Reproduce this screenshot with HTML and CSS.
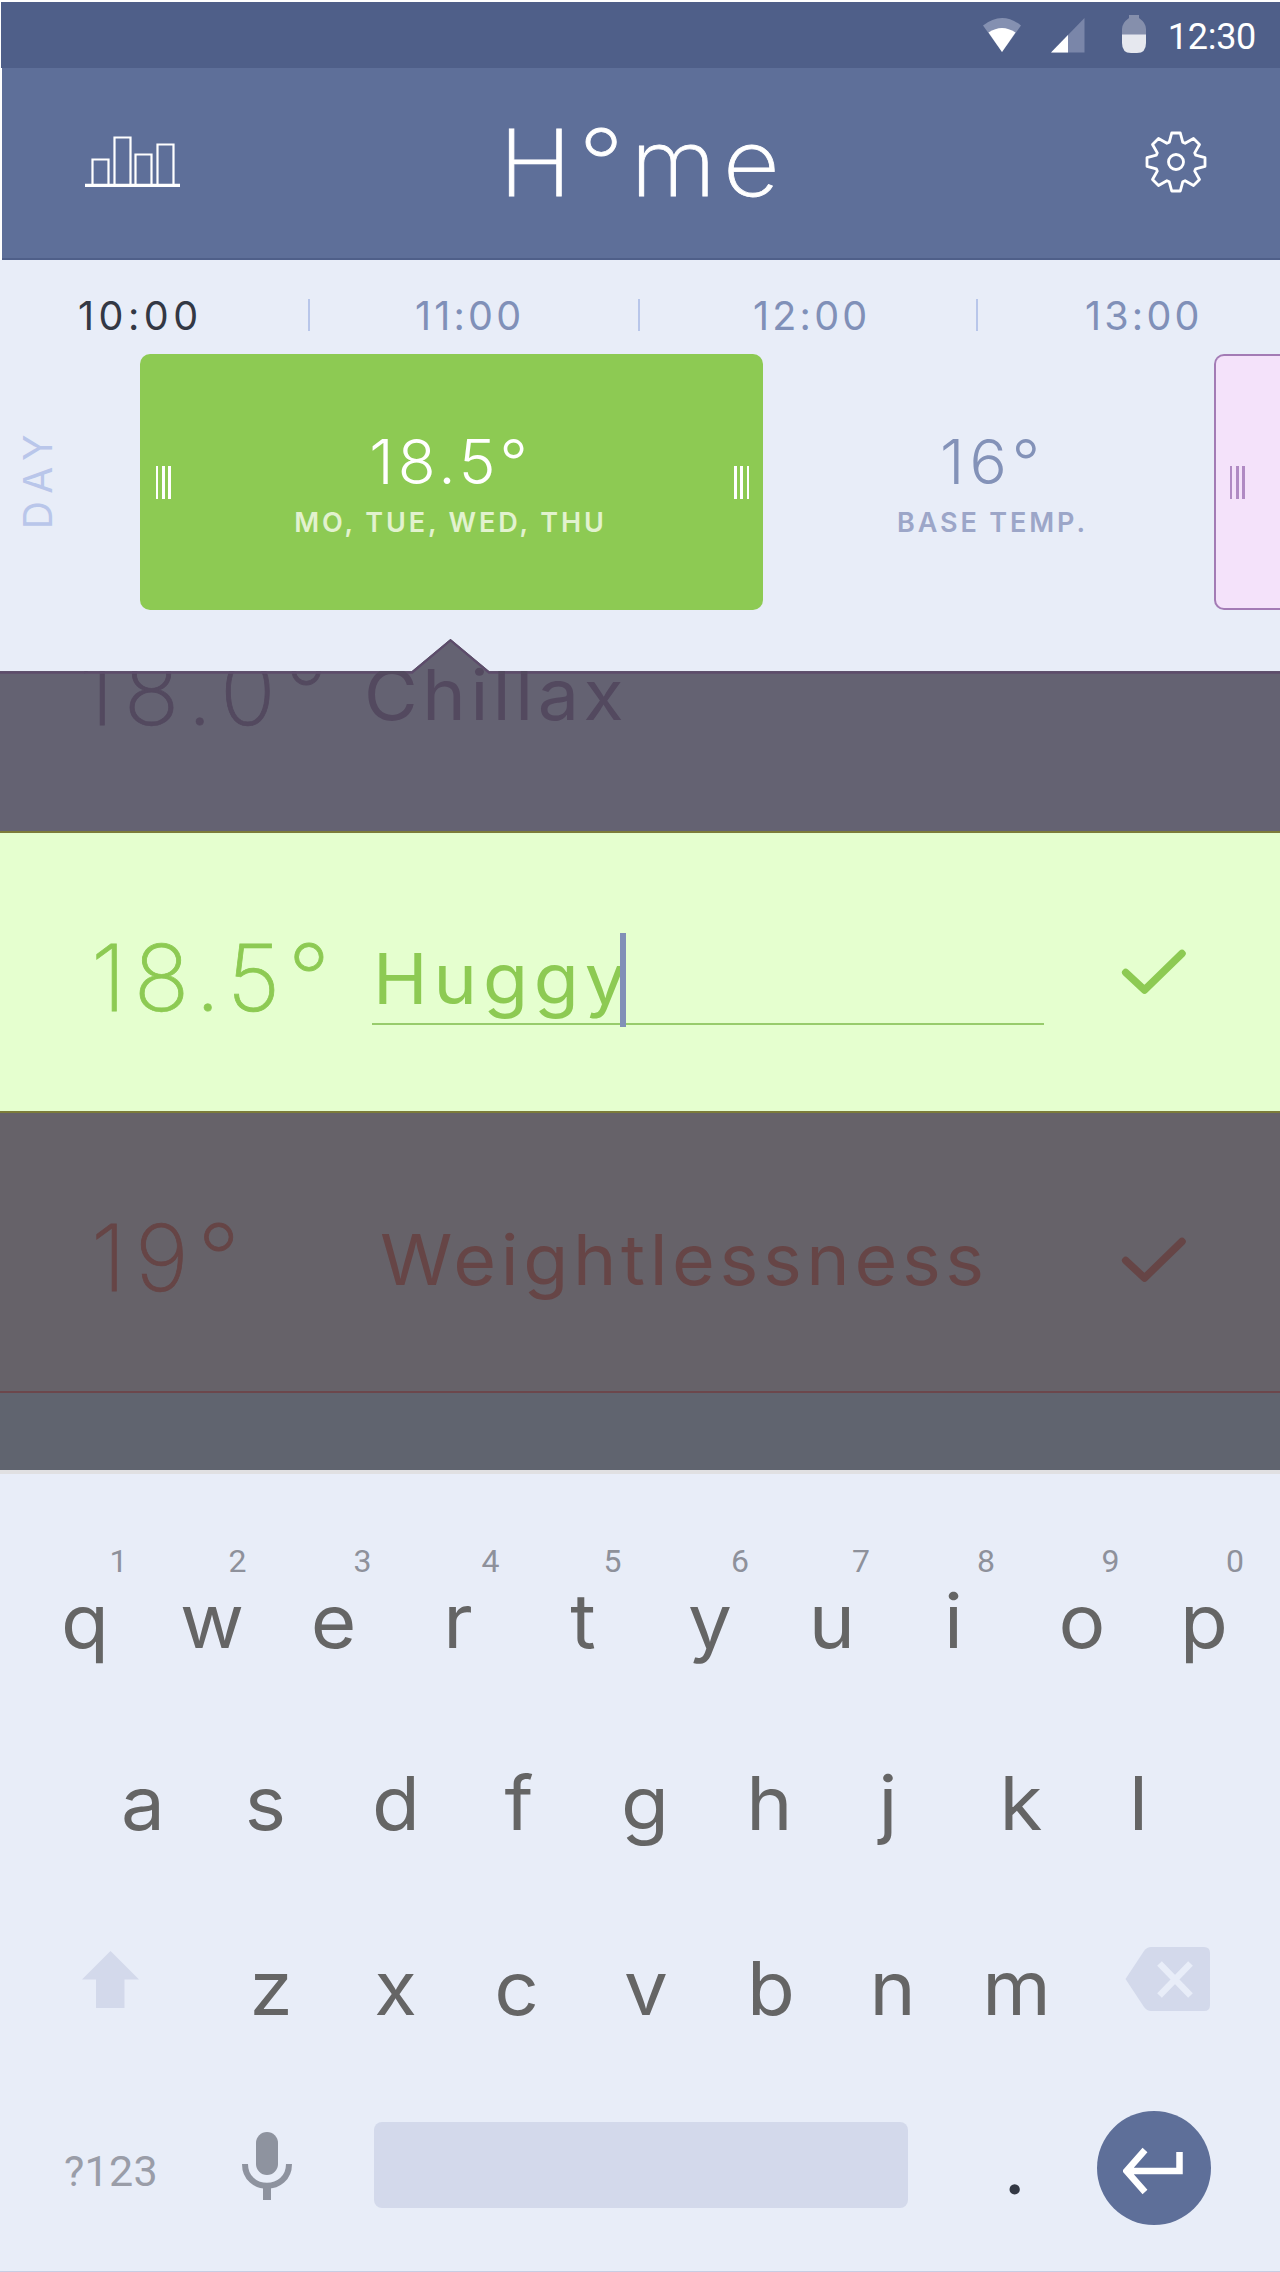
FILE: index.html
```html
<!DOCTYPE html>
<html lang="en">
<head>
<meta charset="utf-8">
<title>H°me</title>
<link rel="stylesheet" href="styles.css">
</head>
<body>
<header class="top">
  <div class="status">
    <svg class="wifi" width="40" height="36" viewBox="0 0 40 36"><path d="M1 8.500Q20 -6.500 39 8.500L20 35z" fill="#8490b1"/><path d="M6.500 15.500Q20 6.500 33.500 15.500L20 35z" fill="#fff"/></svg>
    <svg class="signal" width="34" height="35" viewBox="0 0 34 35"><path d="M33.500 0V34.500H0z" fill="#7a86a9"/><path d="M17 17V34.500H0z" fill="#fff"/></svg>
    <svg class="battery" width="24" height="38" viewBox="0 0 24 38"><path d="M7 0H17V3Q24 8 24 14V21H0V14Q0 8 7 3z" fill="#858fac"/><path d="M0 19.500H24V28Q24 38 15 38H9Q0 38 0 28z" fill="#e6e8ef"/></svg>
    <span class="clock">12:30</span>
  </div>
  <div class="bar">
    <svg class="stats" width="96" height="54" viewBox="0 0 96 54" fill="none" stroke="#fff"><path d="M7.500 50V25.500H23.500V50M29.500 50V3.500H45.500V50M50.500 50V20.500H66.500V50M72.500 50V10.500H88.500V50" stroke-width="2.200"/><path d="M0 51.300H95" stroke-width="3.200"/></svg>
    <h1 class="title">H°me</h1>
    <svg class="gear" width="64" height="64" viewBox="-32 -32 64 64" fill="none" stroke="#fff" stroke-width="2.800" stroke-linejoin="round"><path d="M-6.800-19.700L-4.300-29H4.300L6.800-19.700L9.100-18.700L17.500-23.500L23.500-17.500L18.700-9.100L19.700-6.800L29-4.300V4.300L19.700 6.800L18.700 9.100L23.500 17.500L17.500 23.500L9.100 18.700L6.800 19.700L4.300 29H-4.300L-6.800 19.700L-9.100 18.700L-17.500 23.500L-23.500 17.500L-18.700 9.100L-19.700 6.800L-29 4.300V-4.300L-19.700-6.800L-18.700-9.100L-23.500-17.500L-17.500-23.500L-9.100-18.700z"/><circle r="7.500"/></svg>
  </div>
</header>

<section class="day">
  <div class="hours">
    <span class="hour now">10:00</span><i class="tick"></i>
    <span class="hour">11:00</span><i class="tick"></i>
    <span class="hour">12:00</span><i class="tick"></i>
    <span class="hour">13:00</span>
  </div>
  <div class="slots">
    <div class="dayname"><span>DAY</span></div>
    <div class="slot active">
      <i class="grip"></i>
      <div class="info"><div class="temp">18.5°</div><div class="label">MO, TUE, WED, THU</div></div>
      <i class="grip"></i>
    </div>
    <div class="slot base">
      <div class="info"><div class="temp">16°</div><div class="label">BASE TEMP.</div></div>
    </div>
    <div class="slot next"><i class="grip"></i></div>
  </div>
</section>

<section class="presets">
  <svg class="edge" width="1280" height="36" viewBox="0 0 1280 36" fill="none"><path d="M0 33.500H412L450.500 1L489 33.500H1280" stroke="#5d4c6b" stroke-width="2.500"/></svg>
  <div class="preset chillax"><span class="degrees">18.0°</span><span class="name">Chillax</span></div>
  <div class="preset huggy">
    <span class="degrees">18.5°</span>
    <div class="field"><span class="name">Huggy</span><i class="caret"></i></div>
    <svg class="check" width="66" height="48" viewBox="0 0 66 48"><path d="M4.700 24.500L23.500 42L61 5.500"/></svg>
  </div>
  <div class="preset weightless">
    <span class="degrees">19°</span><span class="name">Weightlessness</span>
    <svg class="check" width="66" height="48" viewBox="0 0 66 48"><path d="M4.700 24.500L23.500 42L61 5.500"/></svg>
  </div>
</section>

<section class="keyboard">
  <div class="hints"><span>1</span><span>2</span><span>3</span><span>4</span><span>5</span><span>6</span><span>7</span><span>8</span><span>9</span><span>0</span></div>
  <div class="keys row1"><span>q</span><span>w</span><span>e</span><span>r</span><span>t</span><span>y</span><span>u</span><span>i</span><span>o</span><span>p</span></div>
  <div class="keys row2"><span>a</span><span>s</span><span>d</span><span>f</span><span>g</span><span>h</span><span>j</span><span>k</span><span>l</span></div>
  <div class="keys row3">
    <svg class="shift" width="57" height="57" viewBox="0 0 57 57"><path d="M28.500 0L57 28.500H42.500V57H14V28.500H0z" fill="#d3d9eb"/></svg>
    <span>z</span><span>x</span><span>c</span><span>v</span><span>b</span><span>n</span><span>m</span>
    <svg class="backspace" width="86" height="64" viewBox="0 0 86 64"><path d="M0.500 32L19 4Q22 0 26 0H79Q85 0 85 6V58Q85 64 79 64H26Q22 64 19 60z" fill="#d3d9eb"/><path d="M34.500 16.500L65.500 48.500M65.500 16.500L34.500 48.500" stroke="#e8edf8" stroke-width="6.500"/></svg>
  </div>
  <div class="row4">
    <span class="symbols">?123</span>
    <svg class="mic" width="50" height="68" viewBox="0 0 50 68"><rect x="14" y="0" width="22" height="43" rx="11" fill="#8e939f"/><path d="M3 32C3 61 47 61 47 32" fill="none" stroke="#8e939f" stroke-width="6"/><path d="M25 54V68" stroke="#8e939f" stroke-width="8"/></svg>
    <div class="space"></div>
    <span class="period">.</span>
    <div class="enter"><svg width="62" height="48" viewBox="0 0 62 48" fill="none" stroke="#fff" stroke-width="6.500"><path d="M22 3L3.500 24L22 45M4 24H56.500V5"/></svg></div>
  </div>
</section>
</body>
</html>
```
FILE: styles.css
```css
* { box-sizing: border-box; margin: 0; padding: 0; }
body { width: 1280px; height: 2272px; overflow: hidden; background: #e8edf8; font-family: Inter, "Liberation Sans", sans-serif; }
svg { display: block; flex: none; }
span, h1 { white-space: nowrap; }

.top { height: 260px; border-top: 2px solid #fff; border-left: 2px solid #fff; background: #5e6f99; }
.status { display: flex; align-items: flex-start; justify-content: flex-end; height: 66px; padding-right: 24px; background: #4f5f89; margin-left: -1px; }
.wifi { margin: 15px 29px 0 0; }
.signal { margin: 16px 37px 0 0; }
.battery { margin: 13px 22px 0 0; }
.clock { font: 400 36px/40px Roboto, sans-serif; letter-spacing: -.300px; color: #fff; margin-top: 15px; }
.bar { display: flex; align-items: center; height: 192px; padding: 0 72px 2px 83px; border-bottom: 2px solid #4f5f89; }
.stats { margin-top: -2px; }
.title { margin-left: 318px; padding-top: 1px; font-size: 92px; line-height: 110px; font-weight: 200; letter-spacing: 6.600px; -webkit-text-stroke: .800px; color: #fff; transform: scaleX(1.07); transform-origin: left; }
.gear { margin-left: auto; }

.day { height: 411px; padding-top: 36px; }
.hours { display: grid; grid-template-columns: 230px 107px 223px 115px 223px 109px 1fr; height: 40px; padding-left: 78px; align-items: center; }
.hour { font-size: 39.500px; line-height: 40px; font-weight: 400; letter-spacing: 3.200px; color: #8090b8; }
.hour.now { letter-spacing: 4.500px; color: #333844; }
.tick { width: 2px; height: 32px; margin-top: -2px; background: #b8c6ea; }
.slots { display: flex; height: 256px; margin-top: 18px; }
.dayname { display: flex; align-items: center; justify-content: center; width: 140px; padding: 0 65px 8px 0; }
.dayname span { writing-mode: vertical-rl; transform: rotate(180deg); font-size: 39px; line-height: 48px; font-weight: 400; letter-spacing: 8.600px; color: #b9c6ea; }
.slot { display: flex; align-items: center; }
.active { width: 623px; padding: 0 14px 0 16px; border-radius: 10px; background: #8dca53; color: #fff; }
.base { width: 451px; color: #8392b8; }
.next { width: 66px; padding-left: 14px; border: 2px solid #a37bb5; border-right: 0; border-radius: 10px 0 0 10px; background: #f4e2fa; color: #b08ac3; }
.grip { width: 15px; height: 33px; background: repeating-linear-gradient(90deg, currentColor 0 2.500px, transparent 2.500px 6.250px); }
.info { flex: 1; height: 256px; padding-top: 78px; text-align: center; }
.active .info { padding-right: 4px; }
.base .info { padding-left: 8px; }
.temp { font-size: 62px; line-height: 60px; font-weight: 300; letter-spacing: 4px; }
.base .temp { letter-spacing: 5px; }
.label { margin-top: 11px; font-size: 27px; line-height: 40px; font-weight: 600; letter-spacing: 2.900px; }
.active .label { color: #e2f2cf; }
.base .label { color: #9ca6c8; }

/* The panel's top edge carries the pointer to the active slot. */
.presets { position: relative; height: 831px; margin-top: -32px; clip-path: polygon(0 32px, 412px 32px, 450.500px 0, 489px 32px, 100% 32px, 100% 100%, 0 100%); background: #60646f; }
.edge { position: absolute; left: 0; top: 0; }
.preset { display: flex; align-items: flex-start; padding-left: 91px; }
.degrees { width: 281px; font-size: 92px; line-height: 100px; font-weight: 200; letter-spacing: 7.800px; -webkit-text-stroke: .800px; }
.name { font-size: 70px; line-height: 100px; font-weight: 400; letter-spacing: 4.400px; transform: scaleX(1.05); transform-origin: left; }
.chillax { height: 192px; background: #646272; color: #53495f; padding: 3px 0 0 79px; }
.chillax .degrees { letter-spacing: 9.800px; }
.chillax .name { margin: 3px 0 0 4px; }
.huggy { height: 282px; border: 2px solid #7c7c3a; border-width: 2px 0; background: #e5ffcf; color: #8dca53; }
.huggy .degrees { margin-top: 95px; }
.field { position: relative; width: 672px; height: 92px; margin-top: 100px; border-bottom: 2px solid #98cc6c; }
.field .name { display: block; line-height: 92px; letter-spacing: 5.600px; padding-left: 1px; }
.caret { position: absolute; left: 248px; top: 0; width: 6px; height: 94px; background: #8190b7; }
.check { margin: 115px 0 0 77px; fill: none; stroke: currentColor; stroke-width: 7.500px; stroke-linecap: round; stroke-linejoin: round; }
.weightless { height: 280px; border-bottom: 2px solid #6c474c; background: #666269; color: #664546; }
.weightless .degrees { margin-top: 95px; letter-spacing: 9px; }
.weightless .name { width: 664px; margin: 97px 0 0 8px; }
.weightless .check { margin-top: 123px; }

.keyboard { height: 802px; border-top: 4px solid #e0e0e2; border-bottom: 1px solid #c8cde4; padding-top: 67px; color: #656565; }
.hints { display: grid; grid-template-columns: 119px 125px 128px 122px 127.500px 121px 125px 124.500px 124.500px 1fr; padding-left: 109.500px; font: 400 32px/40px Roboto, sans-serif; color: #8e919b; }
.keys { display: grid; text-align: center; font-size: 74.500px; line-height: 80px; font-weight: 400; }
.keys span { transform: scaleX(1.05); }
.row1 { grid-template-columns: 126px 128px 115px 134px 116px 138px 106px 137px 120px 124px; padding-left: 22px; }
.row2 { grid-template-columns: 126px 119px 142px 104px 148px 101px 136px 130px 105px; padding-left: 80px; margin-top: 102px; }
.row3 { grid-template-columns: 126px 126px 123px 119px 140px 110px 133px 115px 1fr; padding-left: 82px; margin-top: 105px; }
.shift { margin-top: 3px; }
.backspace { margin: -1px 0 0 51px; }
.row4 { display: flex; align-items: center; height: 114px; margin-top: 83px; padding-left: 64px; }
.symbols { width: 178px; padding-top: 6px; font: 400 43px/50px Roboto, sans-serif; letter-spacing: .300px; color: #9a9da8; }
.mic { margin-top: -4px; }
.space { width: 534px; height: 86px; margin: -7px 0 0 82px; border-radius: 8px; background: #d3d9eb; }
.period { width: 20px; margin: 0 72px 12px 97px; font: 400 82px/80px Lato, sans-serif; color: #333844; }
.enter { display: flex; align-items: center; justify-content: center; width: 114px; height: 114px; padding-top: 6px; border-radius: 50%; background: #5e6f99; }
```
